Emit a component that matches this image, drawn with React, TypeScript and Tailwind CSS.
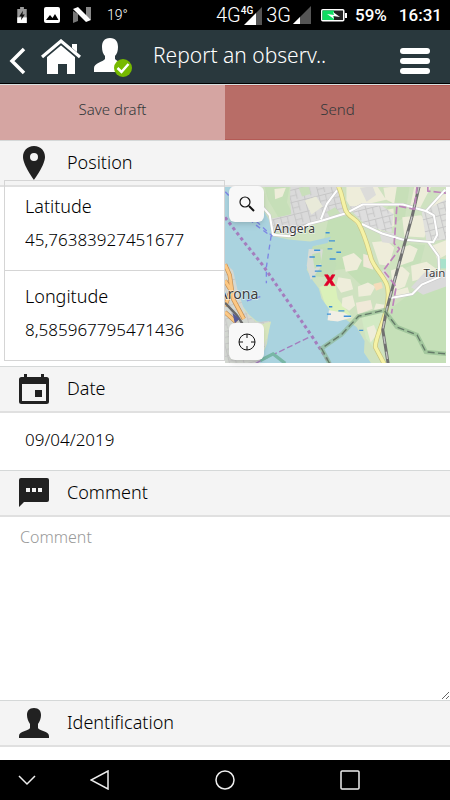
import React, { useState } from "react";

const StatusBar: React.FC = () => {
  return (
    <div className="flex h-[30px] items-center bg-black pr-2 pl-4 font-[Roboto,sans-serif] text-white">
      <svg viewBox="0 0 12 18" className="h-[17px] w-3">
        <path d="M4 0h4v2h3v15H1V2h3z" fill="#9a9a9a" />
        <path d="M1 11h10v6H1z" fill="#fff" />
        <path d="M7 4L3 10h2.500l-.5 4 4-6H6.500z" fill="#111" />
      </svg>
      <svg viewBox="0 0 16 16" className="ml-4 h-4 w-4">
        <rect width="16" height="16" rx="2" fill="#fff" />
        <path d="M2 13l4-5 2.500 3 2.500-4 3.500 6z" fill="#000" />
      </svg>
      <svg viewBox="0 0 18 16" className="ml-[13px] h-4 w-[18px]">
        <path d="M0 4l5 3v7L0 16z" fill="#777" />
        <path d="M13 0h5v13l-5-4z" fill="#888" />
        <path d="M0 2l5-2 13 13-5 2z" fill="#fff" />
      </svg>
      <span className="ml-4 font-[Roboto,sans-serif] text-[14px] leading-4 font-light">19°</span>

      <div className="ml-auto flex items-center">
        <span className="text-[20px] leading-6 font-light">4G</span>
        <div className="flex h-5 items-end">
          <span className="self-start text-[10px] leading-3 font-medium">4G</span>
          <svg viewBox="0 0 18 18" className="-ml-[9px] h-[18px] w-[18px]">
            <path d="M18 0v18H12V6z" fill="#555" />
            <path d="M12 6v12H0z" fill="#fff" />
          </svg>
        </div>
        <span className="ml-1 text-[20px] leading-6 font-light">3G</span>
        <svg viewBox="0 0 18 18" className="ml-0.5 h-[18px] w-[18px]">
          <path d="M18 0v18H0z" fill="#555" />
          <path d="M7 11v7H0z" fill="#fff" />
        </svg>
        <svg viewBox="0 0 26 13" className="ml-2.5 h-[13px] w-[26px]">
          <rect x=".75" y=".75" width="22" height="11" rx="1" fill="#222" stroke="#fff" strokeWidth="1.500" />
          <path d="M1.500 1.500H13v9.500H1.500z" fill="#0fdc62" />
          <path d="M24 4h2v5h-2z" fill="#fff" />
          <path d="M6 5l7 1-1-3 7 5-7-1 1 3z" fill="#fff" />
        </svg>
        <span className="ml-2 text-[17px] leading-6 font-medium">59%</span>
        <span className="ml-3 text-[17px] leading-6 font-medium">16:31</span>
      </div>
    </div>
  );
};

const Header: React.FC = () => {
  return (
    <header className="flex h-[55px] items-center border-b border-[#d8e0e1] bg-[#29383d] pr-5 pl-2 shadow-[inset_0_-1px_0_#000]">
      <button aria-label="Back">
        <svg viewBox="0 0 18 28" className="mt-2 h-7 w-[18px]">
          <path d="M16 2L4 14l12 12" fill="none" stroke="#fff" strokeWidth="3.500" />
        </svg>
      </button>
      <button aria-label="Home" className="ml-[15px]">
        <svg viewBox="0 0 40 36" className="h-9 w-10">
          <path d="M31 5h5v12l-5-5z" fill="#fff" />
          <path d="M6 17L20 5l14 12v18H26V25h-9v10H6z" fill="#fff" />
          <path d="M1 19L20 3l19 16" fill="none" stroke="#29383d" strokeWidth="5" />
          <path d="M1 18L20 2l19 16" fill="none" stroke="#fff" strokeWidth="3.200" />
        </svg>
      </button>
      <button aria-label="Account" className="ml-3">
        <svg viewBox="0 0 40 40" className="h-10 w-10">
          <path
            d="M17 1c6 0 8 4 8 9 0 4-1 7-3 9v3c2 3 11 4 11 9v4H1v-4c0-5 9-6 11-9v-3c-2-2-3-5-3-9 0-5 2-9 8-9z"
            fill="#fff"
          />
          <circle cx="30" cy="31" r="9" fill="#76b900" />
          <path d="M24.500 31l4 4 7-8" fill="none" stroke="#fff" strokeWidth="2.500" />
        </svg>
      </button>
      <h1 className="ml-5 flex-1 pb-1 text-[21px] leading-7 whitespace-nowrap text-white">Report an observ..</h1>
      <button aria-label="Menu" className="mt-2 flex w-[30px] flex-col gap-1">
        <span className="h-1.5 rounded-full bg-white" />
        <span className="h-1.5 rounded-full bg-white" />
        <span className="h-1.5 rounded-full bg-white" />
      </button>
    </header>
  );
};

const SectionTitle: React.FC<{ title: string; children: React.ReactNode }> = ({ title, children }) => {
  return (
    <div className="flex h-[47px] shrink-0 items-center border-t border-b-2 border-t-[#d5d8d8] border-b-[#e0e0e0] bg-[#f4f4f4]">
      <svg viewBox="0 0 34 36" className="ml-[17px] h-9 w-[34px] fill-[#212121]">
        {children}
      </svg>
      <h2 className="ml-4 pb-0.5 text-[18px] leading-6">{title}</h2>
    </div>
  );
};

const MapView: React.FC = () => {
  return (
    <svg viewBox="3 20 657 527" preserveAspectRatio="xMidYMid slice" className="h-44 w-full">
      <defs>
        <pattern id="streets" width="42" height="36" patternUnits="userSpaceOnUse" patternTransform="rotate(-14)">
          <path d="M0 7h42M10 0v36M30 7v29M10 24h20" fill="none" stroke="#c6c6c6" strokeWidth="3" />
        </pattern>
      </defs>
      <rect x="3" y="20" width="657" height="527" fill="#cfe2c0" />

      {/* woods */}
      <path d="M120 20h75l-8 48 16 32-40 14-32-54z" fill="#c6dfb8" />
      <path d="M310 118l60-12 34 44 34 96 36 48-8 30-58-10-50-48-90 10-10-60 40-40z" fill="#c3dfb5" />
      <path d="M262 192l50 14 22 44-10 42-50-4-22-50z" fill="#c1ddb6" />
      <path d="M284 320l44-24 10 58 44 54-66 10z" fill="#daf1b9" />
      <path d="M510 20h42l-14 92-36 20-24-28z" fill="#c7dfb8" />
      <path d="M528 190l70 4-14 54-58 18z" fill="#c7e0ba" />
      <path d="M500 380l60-46 100-30v243H480l-8-100z" fill="#c5e0b8" />
      <path d="M408 404l64-10-26 106-24-28z" fill="#d2eac4" />

      {/* fields */}
      <g fill="#eeedda">
        <path d="M364 20h92l26 40-62 14-38 18-18-30zM474 24l40-4-8 52-26-14zM566 20h50l-34 66-28-8zM470 92l34-6 2 52-42 14-22-30z" />
        <path d="M530 112l56-6 20 30-10 36-60-4zM440 186l44-4 22 20-16 54-28-4zM522 204l30-10 24 12-14 36-40 14zM556 256l46-12 30 22-42 28-30 8z" />
        <path d="M352 230l34-12 24 22-14 28-34 6zM340 290l36 6 8 30-36 10-14-22zM398 318l30-12 22 12-14 26-36 4zM352 352l30-8 8 30-18 16-22-14z" />
        <path d="M496 270l34-12 22 20-14 40-34 14zM508 330l38-10 6 20-44 16zM612 78l30-30 18-6v40l-34 20zM150 28l34-4-10 26-22 8z" />
        <path d="M424 440l22-8 10 26-20 26zM452 368l26 4-6 16-26-2zM620 196l40-16v44l-26 14z" />
      </g>

      {/* towns */}
      <path d="M198 20h138l34 84-80 18-92 40-48-8-12-38 62-12-4-50z" fill="#dadada" />
      <path d="M372 80l92-6 40 28-6 56-74-20-38-38z" fill="#dedede" />
      <path d="M588 98l72-40v120l-58 6z" fill="#dfe0dd" />
      <path d="M556 320l40-44 64-6v48l-68 24z" fill="#dadada" />
      <path d="M404 24l38-4 10 26-28 20zM460 152l50 8-10 30-30-4zM464 276l16-10 12 32-14 6z" fill="#dcdcda" />
      <path
        d="M198 20h138l34 84-80 18-92 40-48-8-12-38 62-12-4-50zM372 80l92-6 40 28-6 56-74-20-38-38zM588 98l72-40v120l-58 6z"
        fill="url(#streets)"
      />
      <path d="M240 62l34-12 20 30-34 24z" fill="#e9ead9" />
      <path d="M222 24l30-4 6 22-26 8zM306 96l24-14 16 18-30 14z" fill="#c9dfbb" />
      <path d="M392 366l44-8 6 26-44 16zM414 220l22 8 8 40-30-10z" fill="#f0e9d8" />
      <path d="M444 310l24-6 4 18-20 8z" fill="#f5dcba" />
      <path d="M640 236h20v28h-20z" fill="#a9e2cc" />

      {/* lake */}
      <path
        d="M3 20h70l42 68 18 30 15 50 44 10 64 6 62-14-10 18-44 10-12 38-6 32 18 32 18 24 8 30 24 32 2 34 46-4 32 22 24 42-2 34 22 33H104l24-60 8-58-38-8-24-20-28-38-20-76-23-10z"
        fill="#aad3df"
      />
      <path d="M312 388l46 8 22 14-42 12-30-4z" fill="#f1eee5" />
      <path d="M252 206l42 2-8 54-28 36-12-42z" fill="#d8dcd6" />
      <path d="M262 222l24-6 4 30-20 20z" fill="#c3dfb5" />

      {/* Arona shore */}
      <path d="M3 246l24 24 14 60 20 60 34 34 42-4-10 60-22 67H3z" fill="#d4d8d2" />
      <path d="M3 246l24 24 14 60 20 60 34 34 42-4-10 60-22 67H3z" fill="url(#streets)" />
      <path d="M106 432l34-10-12 50-14 26z" fill="#d8e6bd" />
      <path d="M3 252l14 32 10 70 32 60M3 300l18 30-18 46M3 394l34 30" fill="none" stroke="#c58f54" strokeWidth="13" />
      <path d="M3 252l14 32 10 70 32 60M3 300l18 30-18 46M3 394l34 30" fill="none" stroke="#fcc884" strokeWidth="9" />
      <path d="M3 366l34 36 34 50" fill="none" stroke="#686868" strokeWidth="7" />
      <path d="M30 404l12 10-8 8z" fill="#575b99" stroke="#575b99" strokeWidth="6" />

      {/* roads */}
      <g fill="none" stroke="#c8c8c8" strokeWidth="9">
        <path d="M114 80l22 26 10 58 48 4 58-36 38-10 72-22 50-26h120l70 20 22 12 10 58-12 22-92-8-60-18-60-28M288 118l18-46 30-40M598 96l60-66M606 184l32 44 2 62-52 22-28 28-64 12" />
      </g>
      <g fill="none" stroke="#fff" strokeWidth="6">
        <path d="M114 80l22 26 10 58 48 4 58-36 38-10 72-22 50-26h120l70 20 22 12 10 58-12 22-92-8-60-18-60-28M288 118l18-46 30-40M598 96l60-66M606 184l32 44 2 62-52 22-28 28-64 12" />
      </g>
      <path
        d="M340 20c10 18 10 34 20 66 6 24 30 28 40 44 20 36 28 72 38 106 10 28 34 46 46 76 10 30 0 80-12 110-10 30-22 54-22 76l26 49"
        fill="none"
        stroke="#c9c47e"
        strokeWidth="14"
      />
      <path
        d="M340 20c10 18 10 34 20 66 6 24 30 28 40 44 20 36 28 72 38 106 10 28 34 46 46 76 10 30 0 80-12 110-10 30-22 54-22 76l26 49"
        fill="none"
        stroke="#f5f2a5"
        strokeWidth="10"
      />

      {/* railway */}
      <path d="M580 20l-20 86-34 124-42 154-12 62 16 101" fill="none" stroke="#707070" strokeWidth="9" />
      <path d="M580 20l-20 86-34 124-42 154-12 62 16 101" fill="none" stroke="#c4c4c4" strokeWidth="4" strokeDasharray="22 24" />

      {/* boundaries and ferry lines */}
      <path d="M3 112l54 70 58 72 64 92 80 116 56 85" fill="none" stroke="#a47dbe" strokeWidth="9" strokeDasharray="10 9" />
      <path d="M94 546l164-80" fill="none" stroke="#a47dbe" strokeWidth="4" strokeDasharray="18 8" />
      <path
        d="M574 20l-8 68-52-10-8 112 16 16-48 64 38 48-14 80M606 20v14l54 6"
        fill="none"
        stroke="#be83bb"
        strokeWidth="5"
        strokeDasharray="22 9"
      />
      <path d="M4 36l84 94 52 38-14 92v48M96 124l48 44M68 360l40-12" fill="none" stroke="#7d86e4" strokeWidth="4" strokeDasharray="15 12" />
      <path d="M314 547l-24-45 60-42 50-54 76-18 38 50 60 24 26 50 60 6" fill="none" stroke="#8ab58b" strokeWidth="13" opacity=".6" />
      <path
        d="M314 547l-24-45 60-42 50-54 76-18 38 50 60 24 26 50 60 6"
        fill="none"
        stroke="#647a68"
        strokeWidth="4"
        strokeDasharray="21 10"
      />
      <path d="M108 538l38-20 36 28" fill="none" stroke="#78b7a6" strokeWidth="10" />

      {/* wetland marks */}
      <path
        d="M302 158h12M312 182h18M268 210h18M308 206h14M334 216h14M314 236h18M254 230h16M274 256h16M270 272h20M262 288h10M312 378h10M340 390h18M356 406h22M306 400h12M402 448h12"
        fill="none"
        stroke="#3e91d8"
        strokeWidth="4"
      />

      <g
        className="font-['Noto_Sans',sans-serif] font-normal"
        fill="#3c3c3c"
        stroke="#fff"
        strokeWidth="4"
        strokeOpacity=".6"
        paintOrder="stroke"
      >
        <text x="149" y="158" fontSize="36">Angera</text>
        <text x="-16" y="354" fontSize="42">Arona</text>
        <text x="593" y="289" fontSize="34">Tain</text>
      </g>
      <path d="M299 283h10l6 10 6-10h9l-10 16 10 16h-10l-6-10-7 10h-9l11-16z" fill="#df0029" stroke="#df0029" strokeWidth="2" />
    </svg>
  );
};

const App: React.FC = () => {
  const [latitude, setLatitude] = useState("45,76383927451677");
  const [longitude, setLongitude] = useState("8,585967795471436");
  const [date, setDate] = useState("09/04/2019");
  const [comment, setComment] = useState("");

  return (
    <div className="flex min-h-screen flex-col bg-white font-['Noto_Sans',sans-serif] font-light text-black">
      <StatusBar />
      <Header />

      <div className="grid h-[55px] grid-cols-2 text-[15px] leading-5 text-[#33383a]">
        <button className="bg-[#d5a5a2] pb-2">Save draft</button>
        <button className="border-y border-[#b45a55] bg-[#b86d67] pb-2">Send</button>
      </div>

      {/* POSITION */}
      <SectionTitle title="Position">
        <path fillRule="evenodd" d="M17 1C10 1 6 6 6 12c0 8 11 23 11 23s11-15 11-23C28 6 24 1 17 1zm0 7a4 4 0 110 8 4 4 0 010-8z" />
      </SectionTitle>
      <div className="grid grid-cols-2 pb-[3px]">
        <div className="-mt-[7px] ml-1 h-[181px] border border-[#d5d5d5]">
          <div className="h-[90px] border-b border-[#d5d5d5] px-5 pt-[13px]">
            <label htmlFor="latitude" className="block text-[18px] leading-6">Latitude</label>
            <input
              id="latitude"
              className="mt-2.5 block w-full text-[17px] leading-6 outline-none"
              value={latitude}
              onChange={(e) => setLatitude(e.target.value)}
            />
          </div>
          <div className="px-5 pt-[13px]">
            <label htmlFor="longitude" className="block text-[18px] leading-6">Longitude</label>
            <input
              id="longitude"
              className="mt-2.5 block w-full text-[17px] leading-6 outline-none"
              value={longitude}
              onChange={(e) => setLongitude(e.target.value)}
            />
          </div>
        </div>
        <div className="relative mr-1">
          <MapView />
          <button aria-label="Search" className="absolute -top-px left-1 flex h-9 w-[35px] items-center justify-center rounded-md bg-[#f8f8f8] shadow-md">
            <svg viewBox="0 0 18 18" className="h-[18px] w-[18px]" fill="none" stroke="#111">
              <circle cx="7" cy="7" r="5" strokeWidth="1.200" />
              <path d="M11 11l5 5" strokeWidth="2" />
            </svg>
          </button>
          <button aria-label="Locate me" className="absolute bottom-[3px] left-1 flex h-[37px] w-[35px] items-center justify-center rounded-md bg-[#f8f8f8] shadow-md">
            <svg viewBox="0 0 18 18" className="h-[18px] w-[18px]" fill="none" stroke="#111">
              <circle cx="9" cy="9" r="8" />
              <path d="M9 1v4M9 13v4M1 9h4M13 9h4" />
            </svg>
          </button>
        </div>
      </div>

      {/* DATE */}
      <SectionTitle title="Date">
        <path
          fillRule="evenodd"
          d="M7 3h3v3h14V3h3v3h2.500Q32 6 32 8.500v22q0 2.500-2.500 2.500h-25Q2 33 2 30.500v-22Q2 6 4.500 6H7zM5 13v17h24V13zm13 6h7v7h-7z"
        />
      </SectionTitle>
      <input
        aria-label="Date"
        className="h-[57px] w-full px-[25px] pb-1 text-[17px] leading-6 outline-none"
        value={date}
        onChange={(e) => setDate(e.target.value)}
      />

      {/* COMMENT */}
      <SectionTitle title="Comment">
        <path fillRule="evenodd" d="M4 3h26q2 0 2 2v20q0 2-2 2H7l-5 5V5q0-2 2-2zm5 10v4h4v-4zm6 0v4h4v-4zm6 0v4h4v-4z" />
      </SectionTitle>
      <textarea
        aria-label="Comment"
        placeholder="Comment"
        className="min-h-24 w-full flex-1 resize px-5 py-2 text-[16px] leading-6 outline-none placeholder:text-[#999]"
        value={comment}
        onChange={(e) => setComment(e.target.value)}
      />

      {/* IDENTIFICATION */}
      <SectionTitle title="Identification">
        <path d="M17 3c5 0 7 3 7 7 0 3-1 6-3 9v4c1 3 11 3 11 8v2H2v-2c0-5 10-5 11-8v-4c-2-3-3-6-3-9 0-4 2-7 7-7z" />
      </SectionTitle>

      <nav className="mt-[13px] grid h-10 grid-cols-[38px_1fr_1fr_1fr_38px] items-center justify-items-center bg-black">
        <button aria-label="Hide" className="pl-4">
          <svg viewBox="0 0 20 20" className="h-5 w-5" fill="none" stroke="#eee" strokeWidth="1.500">
            <path d="M2 6l8 8 8-8" />
          </svg>
        </button>
        <button aria-label="Back to previous app">
          <svg viewBox="0 0 20 20" className="h-5 w-5" fill="none" stroke="#eee" strokeWidth="1.500">
            <path d="M18 1v18L1 10z" />
          </svg>
        </button>
        <button aria-label="Home screen">
          <svg viewBox="0 0 20 20" className="h-5 w-5" fill="none" stroke="#eee" strokeWidth="1.500">
            <circle cx="10" cy="10" r="9" />
          </svg>
        </button>
        <button aria-label="Recent apps">
          <svg viewBox="0 0 20 20" className="h-5 w-5" fill="none" stroke="#eee" strokeWidth="1.500">
            <rect x="1" y="1" width="18" height="18" rx="1" />
          </svg>
        </button>
      </nav>
    </div>
  );
};

export default App;
